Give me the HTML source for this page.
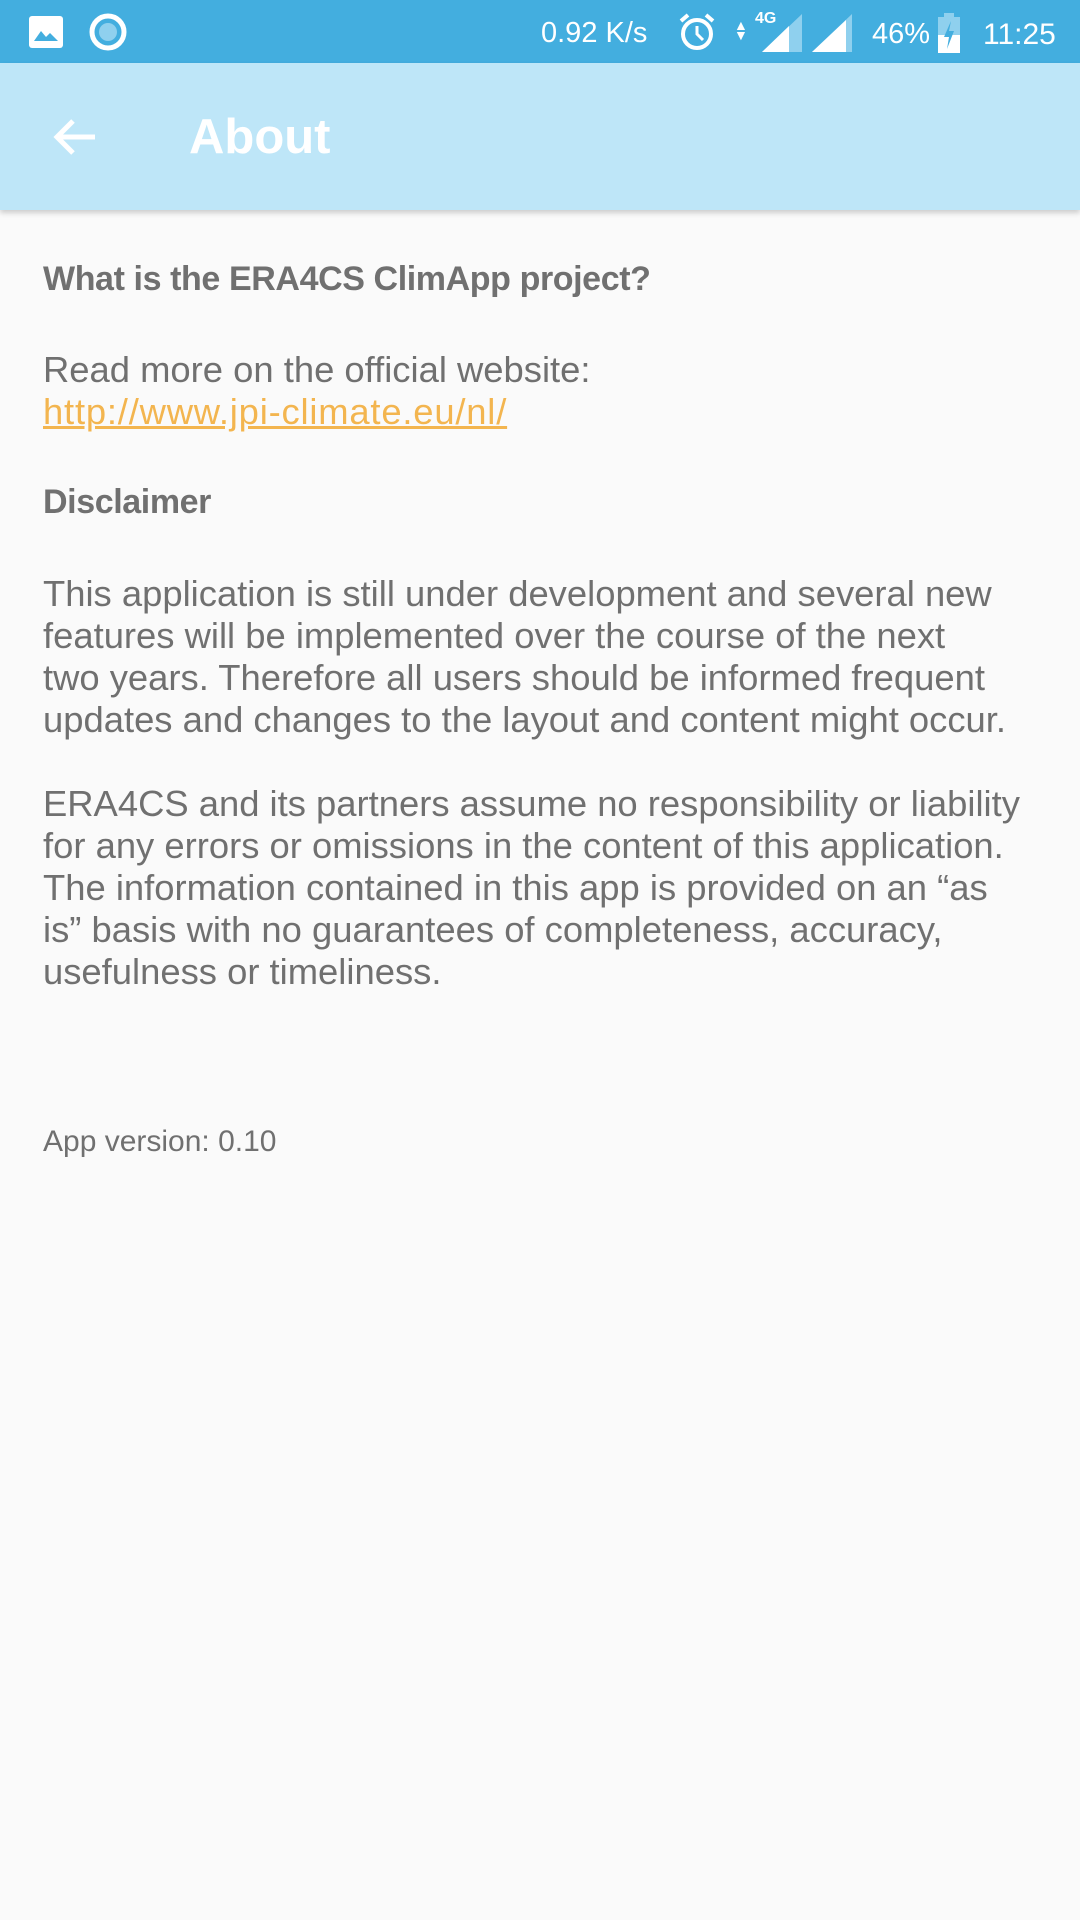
<!DOCTYPE html>
<html><head><meta charset="utf-8"><style>
html,body{margin:0;padding:0}
body{width:1080px;height:1920px;background:#fafafa;position:relative;overflow:hidden;font-family:"Liberation Sans",sans-serif}
.sb{position:absolute;left:0;top:0;width:1080px;height:63px;background:#43aedf;color:#fff}
.tb{position:absolute;left:0;top:63px;width:1080px;height:147px;background:#bee6f8;box-shadow:0 3px 5px rgba(0,0,0,0.18)}
.t{position:absolute;left:43px;color:#707070;font-size:36.4px;white-space:nowrap;line-height:42px}
.b{font-weight:bold;font-size:34px;letter-spacing:-0.4px}
a{color:#f3b54f;text-decoration:underline;letter-spacing:0.8px}
</style></head><body>
<div class="sb">
 <svg style="position:absolute;left:29px;top:16px" width="34" height="32" viewBox="0 0 34 32"><rect x="0" y="0" width="34" height="32" rx="3" fill="#fff"/><path d="M5 25 L12 15 L17 21 L21 17 L29 25Z" fill="#43aedf"/></svg>
 <svg style="position:absolute;left:89px;top:13px" width="38" height="38"><circle cx="19" cy="19" r="16" fill="none" stroke="#fff" stroke-width="5"/><circle cx="19" cy="19" r="9" fill="#8fd0ee"/></svg>
 <div style="position:absolute;left:541px;top:17px;font-size:29px">0.92 K/s</div>
 <svg style="position:absolute;left:677px;top:12px" width="40" height="40"><circle cx="20" cy="22" r="14" fill="none" stroke="#fff" stroke-width="4"/><path d="M20 14 V22 L26 28" stroke="#fff" stroke-width="3" fill="none"/><path d="M4 9 L11 3 M36 9 L29 3" stroke="#fff" stroke-width="4"/></svg>
 <div style="position:absolute;left:734px;top:20px;font-size:14px;line-height:10px">▲<br>▼</div>
 <div style="position:absolute;left:755px;top:10px;font-size:16px;font-weight:bold">4G</div>
 <svg style="position:absolute;left:762px;top:14px" width="40" height="38"><path d="M0 38 L40 0 V38Z" fill="#8fd0ee"/><path d="M0 38 L27 12 V38Z" fill="#fff"/></svg>
 <svg style="position:absolute;left:812px;top:14px" width="40" height="38"><path d="M0 38 L40 0 V38Z" fill="#8fd0ee"/><path d="M0 38 L34 6 V38Z" fill="#fff"/></svg>
 <div style="position:absolute;left:872px;top:18px;font-size:29px">46%</div>
 <svg style="position:absolute;left:938px;top:13px" width="22" height="40"><rect x="6" y="0" width="10" height="4" fill="#8fd0ee"/><rect x="0" y="4" width="22" height="36" fill="#8fd0ee"/><rect x="0" y="22" width="22" height="18" fill="#fff"/><path d="M13 8 L6 24 H11 L9 36 L16 18 H11Z" fill="#43aedf"/></svg>
 <div style="position:absolute;left:983px;top:18px;font-size:30px">11:25</div>
</div>
<div class="tb">
 <svg style="position:absolute;left:51px;top:54px" width="46" height="40" viewBox="0 0 46 40"><path d="M44 20 H6 M22 4 L6 20 L22 36" stroke="#fff" stroke-width="5" fill="none"/></svg>
 <div style="position:absolute;left:189px;top:46px;font-size:49px;color:#fff;font-weight:bold">About</div>
</div>
<div class="t b" style="top:258px">What is the ERA4CS ClimApp project?</div>
<div class="t" style="top:349px">Read more on the official website:</div>
<div class="t" style="top:391px"><a>http://www.jpi-climate.eu/nl/</a></div>
<div class="t b" style="top:481px">Disclaimer</div>
<div class="t" style="top:573px">This application is still under development and several new<br>features will be implemented over the course of the next<br>two years. Therefore all users should be informed frequent<br>updates and changes to the layout and content might occur.</div>
<div class="t" style="top:783px">ERA4CS and its partners assume no responsibility or liability<br>for any errors or omissions in the content of this application.<br>The information contained in this app is provided on an “as<br>is” basis with no guarantees of completeness, accuracy,<br>usefulness or timeliness.</div>
<div class="t" style="top:1125px;font-size:30px;line-height:34px">App version: 0.10</div>
</body></html>
